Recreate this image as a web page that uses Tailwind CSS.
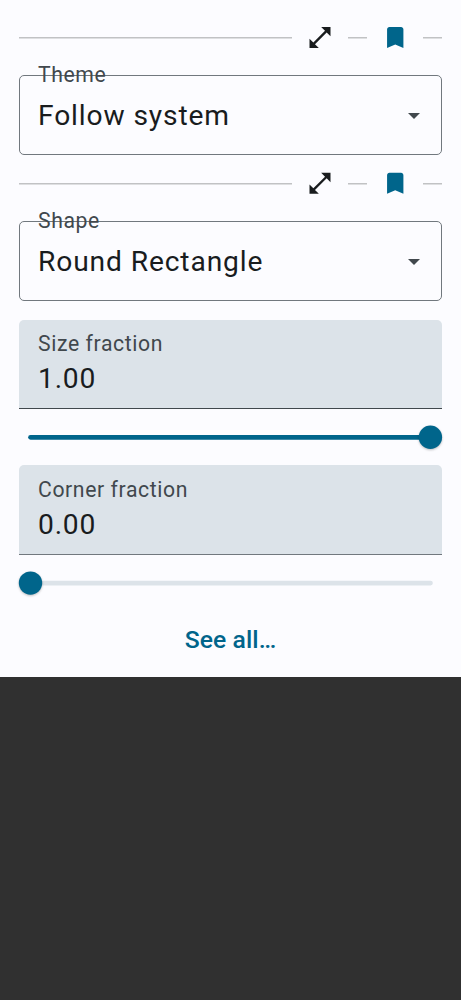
<!DOCTYPE html>
<html lang="en">
<head>
<meta charset="utf-8">
<title>Settings</title>
<script src="https://cdn.jsdelivr.net/npm/@tailwindcss/browser@4"></script>
</head>
<body class="h-[1000px] w-[461px] overflow-hidden bg-[#303030] font-[Roboto,sans-serif] text-[#191c1e]">
<main class="flex h-[677px] flex-col bg-[#fcfcff] px-[19px]">
  <div class="flex h-[75px] shrink-0 items-center">
    <div class="h-[2px] w-[273px] border-t border-[#c1c2c4] bg-[#dedfe1]"></div>
    <svg class="mb-px ml-[14px] h-[28px] w-[28px]" viewBox="0 -0.400 24 24" fill="#191c1e"><path d="M21 11V3h-8l3.290 3.290-10 10L3 13v8h8l-3.290-3.290 10-10z"/></svg>
    <div class="ml-[14px] h-[2px] w-[19px] border-t border-[#c1c2c4] bg-[#dedfe1]"></div>
    <svg class="mb-px ml-[14px] h-[28px] w-[28px]" viewBox="-0.200 -0.400 24 24" fill="#00658b"><path d="M17 3H7c-1.100 0-1.990.9-1.990 2L5 21l7-3 7 3V5c0-1.100-.9-2-2-2z"/></svg>
    <div class="ml-[14px] h-[2px] w-[19px] border-t border-[#c1c2c4] bg-[#dedfe1]"></div>
  </div>
  <div class="relative flex h-[80px] shrink-0 items-center justify-between rounded-[5px] border border-[#71787e] pt-[2px] pr-[21px] pl-[18px]">
    <span class="absolute top-[-13px] left-[18px] text-[21.200px] leading-6 tracking-[0.6px] text-[#41484d]">Theme</span>
    <span class="text-[28.200px] leading-8 tracking-[0.87px]">Follow system</span>
    <svg class="h-[6px] w-[12px]" viewBox="0 0.300 12 6" fill="#41484d"><path d="M0 0.300h12L6 6.300z"/></svg>
  </div>
  <div class="flex h-[66px] shrink-0 items-center pb-[9px]">
    <div class="h-[2px] w-[273px] border-t border-[#c1c2c4] bg-[#dedfe1]"></div>
    <svg class="mb-px ml-[14px] h-[28px] w-[28px]" viewBox="0 -0.300 24 24" fill="#191c1e"><path d="M21 11V3h-8l3.290 3.290-10 10L3 13v8h8l-3.290-3.290 10-10z"/></svg>
    <div class="ml-[14px] h-[2px] w-[19px] border-t border-[#c1c2c4] bg-[#dedfe1]"></div>
    <svg class="mb-px ml-[14px] h-[28px] w-[28px]" viewBox="-0.200 -0.300 24 24" fill="#00658b"><path d="M17 3H7c-1.100 0-1.990.9-1.990 2L5 21l7-3 7 3V5c0-1.100-.9-2-2-2z"/></svg>
    <div class="ml-[14px] h-[2px] w-[19px] border-t border-[#c1c2c4] bg-[#dedfe1]"></div>
  </div>
  <div class="relative flex h-[80px] shrink-0 items-center justify-between rounded-[5px] border border-[#71787e] pt-[2px] pr-[21px] pl-[18px]">
    <span class="absolute top-[-13px] left-[18px] text-[21.200px] leading-6 tracking-[0.6px] text-[#41484d]">Shape</span>
    <span class="text-[28.200px] leading-8 tracking-[0.87px]">Round Rectangle</span>
    <svg class="h-[6px] w-[12px]" viewBox="0 0.300 12 6" fill="#41484d"><path d="M0 0.300h12L6 6.300z"/></svg>
  </div>
  <div class="mt-[19px] flex h-[89px] shrink-0 flex-col rounded-t-[5px] border-b border-[#41484d] bg-[#dce3e9] pt-[12px] pl-[19px]">
    <span class="text-[21.200px] leading-6 tracking-[0.6px] text-[#41484d]">Size fraction</span>
    <span class="mt-[7px] text-[28.200px] leading-8 tracking-[0.8px]">1.00</span>
  </div>
  <svg class="h-[56px] w-[423px] shrink-0 overflow-visible" viewBox="19 409 423 56">
    <path d="M30.500 437.300H430" stroke="#00658b" stroke-width="4.700" stroke-linecap="round"/>
    <circle class="drop-shadow-[0_1px_1px_rgba(0,0,0,0.25)]" cx="430.400" cy="437.300" r="11.700" fill="#00658b"/>
  </svg>
  <div class="flex h-[90px] shrink-0 flex-col rounded-t-[5px] border-b border-[#71787e] bg-[#dce3e9] pt-[13px] pl-[19px]">
    <span class="text-[21.200px] leading-6 tracking-[0.6px] text-[#41484d]">Corner fraction</span>
    <span class="mt-[7px] text-[28.200px] leading-8 tracking-[0.8px]">0.00</span>
  </div>
  <svg class="h-[57px] w-[423px] shrink-0 overflow-visible" viewBox="19 555 423 57">
    <path d="M30.500 583.100H430.500" stroke="#dce3e9" stroke-width="4.700" stroke-linecap="round"/>
    <circle class="drop-shadow-[0_1px_1px_rgba(0,0,0,0.25)]" cx="30.500" cy="583.100" r="11.700" fill="#00658b"/>
  </svg>
  <div class="mt-[12px] text-center text-[24.700px] leading-8 font-medium tracking-[0.1px] text-[#00658b]">See all…</div>
</main>
</body>
</html>
